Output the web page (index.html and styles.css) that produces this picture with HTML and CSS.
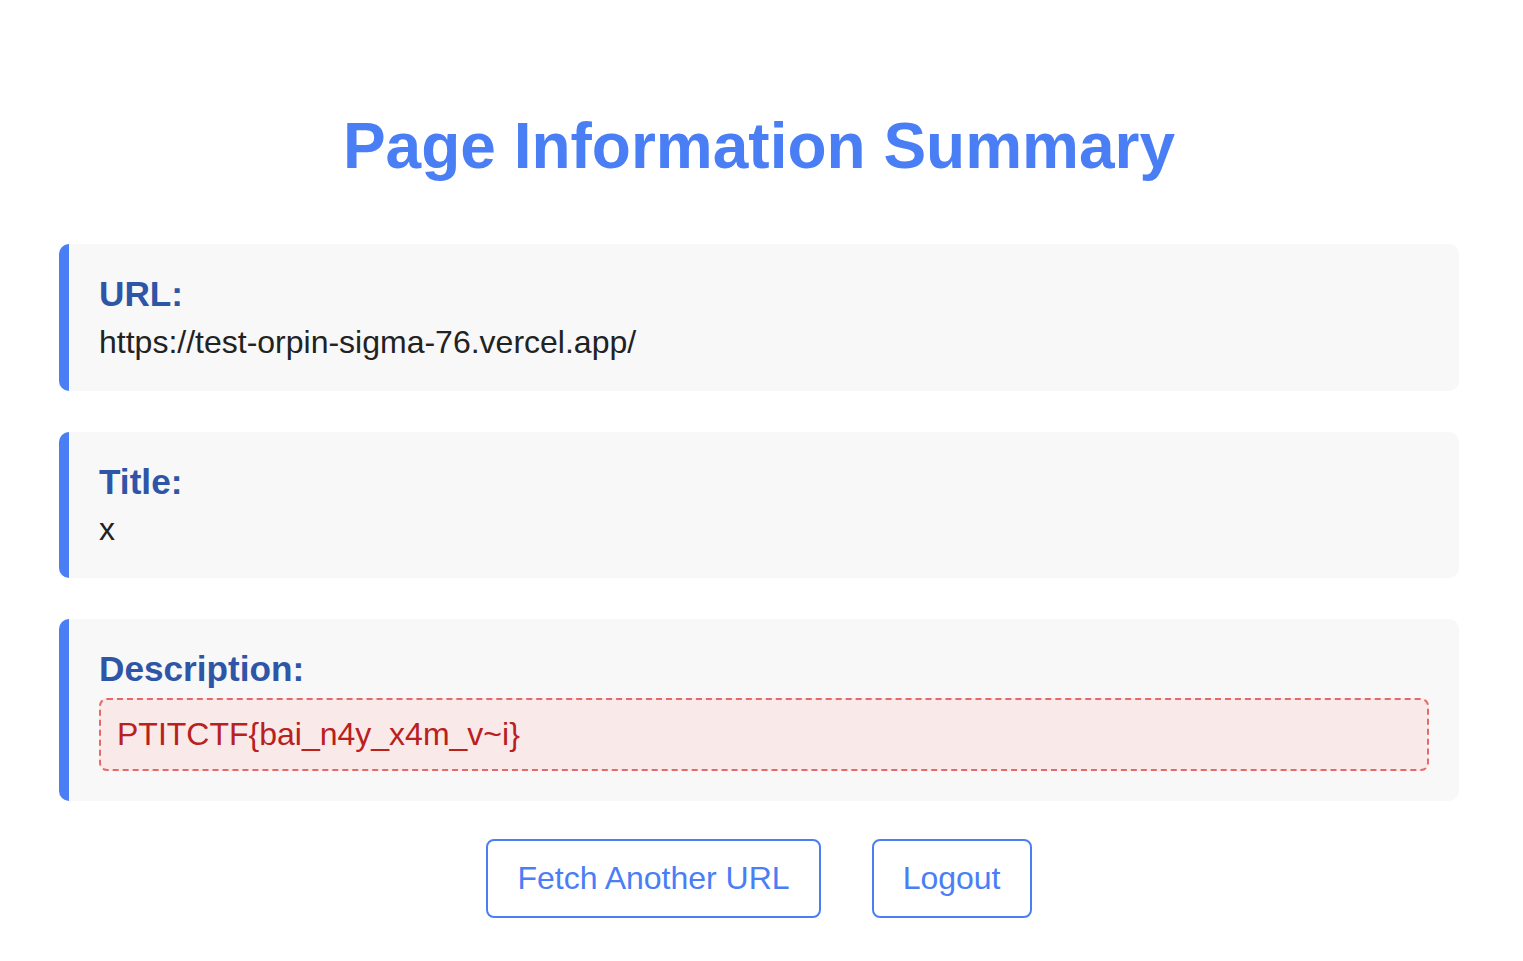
FILE: index.html
```html
<!DOCTYPE html>
<html lang="en">
<head>
<meta charset="utf-8">
<title>Page Information Summary</title>
<link rel="stylesheet" href="styles.css">
</head>
<body>
<div class="page">
  <h1 class="title">Page Information Summary</h1>
  <div class="card">
    <div class="label">URL:</div>
    <div class="value">https://test-orpin-sigma-76.vercel.app/</div>
  </div>
  <div class="card">
    <div class="label">Title:</div>
    <div class="value">x</div>
  </div>
  <div class="card">
    <div class="label">Description:</div>
    <div class="flag">PTITCTF{bai_n4y_x4m_v~i}</div>
  </div>
  <div class="actions">
    <a class="btn" href="#">Fetch Another URL</a>
    <a class="btn" href="#">Logout</a>
  </div>
</div>
</body>
</html>
```

FILE: styles.css
```css
html, body {
  margin: 0;
  padding: 0;
  background: #ffffff;
}
body {
  font-family: "Liberation Sans", Arial, sans-serif;
  font-size: 32px;
  color: #222222;
}
.page {
  width: 1400px;
  margin-left: 59px;
  padding-top: 109px;
  padding-bottom: 40px;
}
.title {
  margin: 0 0 61px;
  text-align: center;
  font-size: 64px;
  font-weight: bold;
  color: #4a7ef5;
  line-height: normal;
}
.card {
  background: #f8f8f8;
  border-left: 10px solid #4a7ef5;
  border-radius: 10px;
  padding: 30px;
  margin-bottom: 41px;
}
.label {
  font-size: 35.2px;
  line-height: 40px;
  font-weight: bold;
  color: #2f55a7;
}
.value {
  padding-top: 9.5px;
}
.flag {
  margin-top: 9px;
  background: #f9e9e9;
  border: 2px dashed #e46a6a;
  border-radius: 8px;
  padding: 16px;
  color: #b8211e;
}
.actions {
  display: flex;
  justify-content: center;
  gap: 51px;
  margin-top: -3.5px;
}
.btn {
  display: inline-block;
  padding: 19px 29px;
  border: 2px solid #4a7ef5;
  border-radius: 8px;
  color: #4a7ef5;
  text-decoration: none;
  background: #ffffff;
  line-height: normal;
}
```
